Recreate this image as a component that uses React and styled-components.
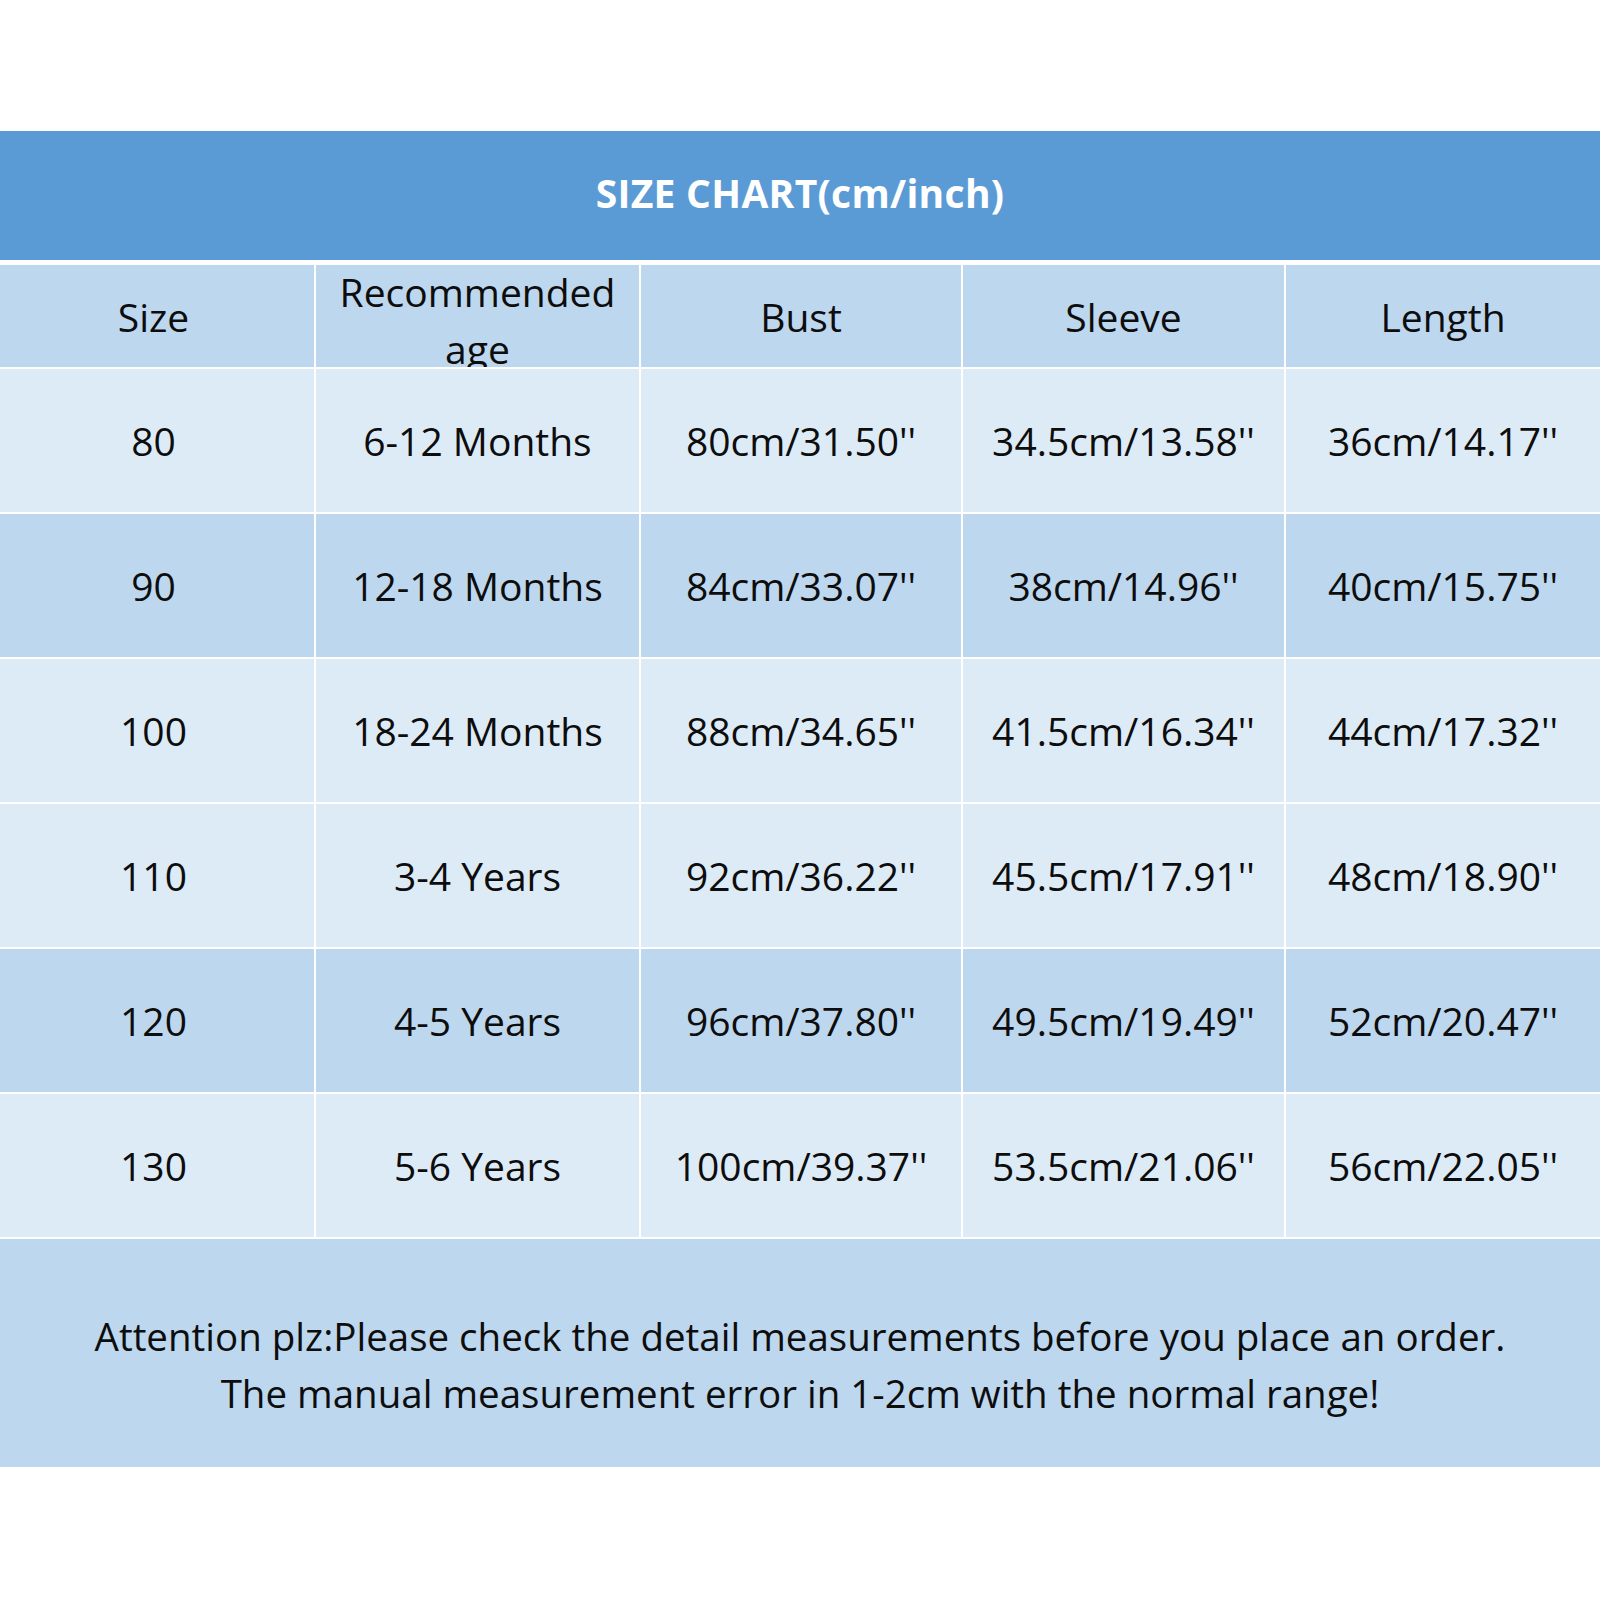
import React from "react";
import styled, { createGlobalStyle } from "styled-components";

const Global = createGlobalStyle`
  html, body { margin: 0; padding: 0; background: #ffffff; }
  body { font-family: "Open Sans", "Noto Sans", sans-serif; }
`;

const Page = styled.div`
  width: 1600px;
  height: 1600px;
  background: #ffffff;
  padding-top: 131px;
  box-sizing: border-box;
`;

const TitleBar = styled.div`
  height: 129px;
  background: #5b9bd5;
  display: flex;
  align-items: center;
  justify-content: center;
  padding-bottom: 6px;
  box-sizing: border-box;
  color: #ffffff;
  font-weight: 700;
  font-size: 39px;
  letter-spacing: 0.3px;
`;

const Table = styled.div`
  margin-top: 5px;
  display: grid;
  grid-template-columns: 314px 323px 320px 321px 314px;
  column-gap: 2px;
  row-gap: 2px;
  background: #ffffff;
`;

const Cell = styled.div`
  height: ${(p) => (p.$head ? "102px" : "143px")};
  background: ${(p) => (p.$dark ? "#bdd7ee" : "#ddebf7")};
  display: flex;
  align-items: center;
  justify-content: center;
  text-align: center;
  overflow: hidden;
  box-sizing: border-box;
  padding-right: ${(p) => (p.$first ? "7px" : "0")};
  font-size: 39px;
  line-height: 57px;
  color: #0d0d0d;
`;

const HeadLabel = styled.span`
  white-space: pre-line;
  padding-top: ${(p) => (p.$multi ? "7px" : "0")};
`;

const Footer = styled.div`
  margin-top: 2px;
  height: 228px;
  background: #bdd7ee;
  display: flex;
  flex-direction: column;
  align-items: center;
  justify-content: center;
  padding-top: 24px;
  box-sizing: border-box;
  font-size: 38.5px;
  line-height: 57px;
  color: #0d0d0d;
  text-align: center;
`;

const headers = ["Size", "Recommended\nage", "Bust", "Sleeve", "Length"];

const rows = [
  { dark: false, cells: ["80", "6-12 Months", "80cm/31.50''", "34.5cm/13.58''", "36cm/14.17''"] },
  { dark: true, cells: ["90", "12-18 Months", "84cm/33.07''", "38cm/14.96''", "40cm/15.75''"] },
  { dark: false, cells: ["100", "18-24 Months", "88cm/34.65''", "41.5cm/16.34''", "44cm/17.32''"] },
  { dark: false, cells: ["110", "3-4 Years", "92cm/36.22''", "45.5cm/17.91''", "48cm/18.90''"] },
  { dark: true, cells: ["120", "4-5 Years", "96cm/37.80''", "49.5cm/19.49''", "52cm/20.47''"] },
  { dark: false, cells: ["130", "5-6 Years", "100cm/39.37''", "53.5cm/21.06''", "56cm/22.05''"] },
];

export default function App() {
  return (
    <Page>
      <Global />
      <TitleBar>SIZE CHART(cm/inch)</TitleBar>
      <Table>
        {headers.map((h, i) => (
          <Cell key={"h" + i} $head $dark $first={i === 0}>
            <HeadLabel $multi={h.includes("\n")}>{h}</HeadLabel>
          </Cell>
        ))}
        {rows.map((r, ri) =>
          r.cells.map((c, ci) => (
            <Cell key={ri + "-" + ci} $dark={r.dark} $first={ci === 0}>
              {c}
            </Cell>
          ))
        )}
      </Table>
      <Footer>
        <div>Attention plz:Please check the detail measurements before you place an order.</div>
        <div>The manual measurement error in 1-2cm with the normal range!</div>
      </Footer>
    </Page>
  );
}
